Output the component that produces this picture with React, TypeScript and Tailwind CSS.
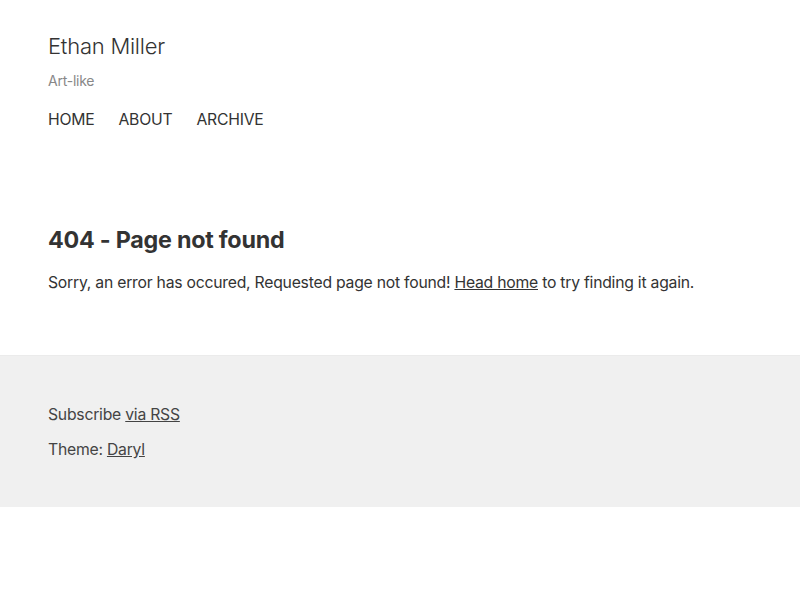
import React from 'react';

const App: React.FC = () => {
  return (
    <div className="min-h-screen bg-white text-[#333] font-['Inter',sans-serif] tracking-[-0.015em]">
      {/* Header */}
      <header className="px-12 pt-[31px]">
        <h1 className="text-[22px] leading-[30px] font-light text-[#333]">Ethan Miller</h1>
        <p className="mt-[10px] text-[14px] leading-[20px] text-[#888]">Art-like</p>
        <nav className="mt-[17px] flex gap-6 text-[15.75px] leading-[24px] text-[#333]">
          <a href="#">HOME</a>
          <a href="#">ABOUT</a>
          <a href="#">ARCHIVE</a>
        </nav>
      </header>

      {/* Main */}
      <main className="px-12 pt-[93px] pb-[60px]">
        <h2 className="text-[23.3px] leading-[30px] font-bold text-[#333]">404 - Page not found</h2>
        <p className="mt-[16px] text-[15.75px] leading-[24px] text-[#333]">
          Sorry, an error has occured, Requested page not found!{' '}
          <a href="#" className="underline">Head home</a> to try finding it again.
        </p>
      </main>

      {/* Footer */}
      <footer className="bg-[#f0f0f0] border-t border-[#ebebeb] px-12 pt-[47px] pb-[45px] text-[15.75px] leading-[24px] text-[#444]">
        <p>
          Subscribe <a href="#" className="underline">via RSS</a>
        </p>
        <p className="mt-[11px]">
          Theme: <a href="#" className="underline">Daryl</a>
        </p>
      </footer>
    </div>
  );
};

export default App;
